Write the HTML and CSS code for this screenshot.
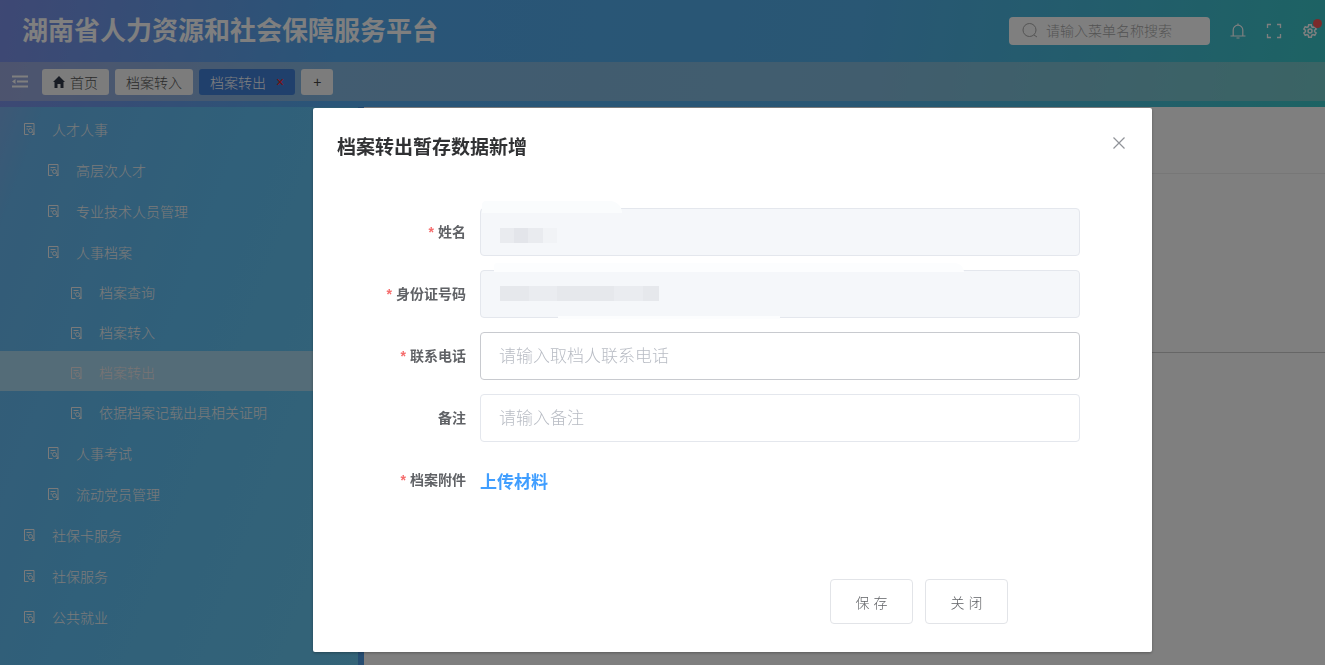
FILE: index.html
```html
<!DOCTYPE html>
<html lang="zh-CN">
<head>
<meta charset="utf-8">
<title>湖南省人力资源和社会保障服务平台</title>
<link rel="stylesheet" href="styles.css">
</head>
<body>
<svg class="sprite" aria-hidden="true">
  <symbol id="doc" viewBox="0 0 12 13"><path d="M5.500 12.500h-4v-11h9.500v11H9M3.500 4.500h5M3.500 7H5M9.500 10l2.200 2.500" fill="none" stroke="currentColor"/><circle cx="7.500" cy="8.500" r="2" fill="none" stroke="currentColor"/></symbol>
</svg>
<div class="app">
  <header class="header">
    <h1 class="brand">湖南省人力资源和社会保障服务平台</h1>
    <div class="tools">
      <label class="search">
        <svg width="18" height="18" viewBox="0 0 18 18" fill="none" stroke="currentColor"><circle cx="8.500" cy="8" r="6.500"/><path d="M13 13l3 2"/></svg>
        <input type="text" placeholder="请输入菜单名称搜索" aria-label="菜单搜索">
      </label>
      <button class="tool" aria-label="通知"><svg width="16" height="16" viewBox="0 0 16 16" fill="none" stroke="currentColor" stroke-width="1.200"><path d="M.5 13h15M3.200 13V7a4.800 4.800 0 0 1 9.600 0v6M8 2.200V.5M6.500 15h3"/></svg></button>
      <button class="tool" aria-label="全屏"><svg width="16" height="16" viewBox="0 0 16 16" fill="none" stroke="currentColor" stroke-width="1.300"><path d="M1.500 5V1.500H5M11 1.500h3.500V5M14.500 11v3.500H11M5 14.500H1.500V11"/></svg></button>
      <button class="tool tool-badge" aria-label="设置"><svg width="16" height="16" viewBox="0 0 16 16" fill="none" stroke="currentColor" stroke-width="1.500"><path d="M6.700 1.800h2.600l.4 1.900 1.200.7 1.900-.7 1.300 2.300-1.500 1.300v1.400l1.500 1.300-1.300 2.300-1.900-.7-1.200.7-.4 1.900H6.700l-.4-1.900-1.200-.7-1.900.7L1.900 10l1.500-1.300V7.300L1.900 6l1.300-2.300 1.900.7 1.200-.7z"/><circle cx="8" cy="8" r="2"/></svg></button>
    </div>
  </header>
  <nav class="tabs">
    <button class="fold" aria-label="折叠菜单"><svg width="16" height="13" viewBox="0 0 16 13" fill="none" stroke="currentColor" stroke-width="2"><path d="M0 1.500h16M5 6.500h11M0 11.500h16"/><path d="M3.500 4L0 6.500 3.500 9z" fill="currentColor" stroke="none"/></svg></button>
    <button class="tab"><svg width="12" height="12" viewBox="0 0 12 12" fill="currentColor"><path d="M6 0l6 6h-1.500v6h-3V8h-3v4h-3V6H0z"/></svg>首页</button>
    <button class="tab">档案转入</button>
    <button class="tab tab-active">档案转出<span class="tab-close">×</span></button>
    <button class="tab tab-add">+</button>
  </nav>
  <div class="body">
    <aside class="side">
      <ul class="menu">
        <li><a href="#" class="item"><svg><use href="#doc"/></svg>人才人事</a></li>
        <li><a href="#" class="item second"><svg><use href="#doc"/></svg>高层次人才</a></li>
        <li><a href="#" class="item second"><svg><use href="#doc"/></svg>专业技术人员管理</a></li>
        <li><a href="#" class="item second"><svg><use href="#doc"/></svg>人事档案</a></li>
        <li><a href="#" class="item third"><svg><use href="#doc"/></svg>档案查询</a></li>
        <li><a href="#" class="item third"><svg><use href="#doc"/></svg>档案转入</a></li>
        <li><a href="#" class="item third active"><svg><use href="#doc"/></svg>档案转出</a></li>
        <li><a href="#" class="item third"><svg><use href="#doc"/></svg>依据档案记载出具相关证明</a></li>
        <li><a href="#" class="item second"><svg><use href="#doc"/></svg>人事考试</a></li>
        <li><a href="#" class="item second"><svg><use href="#doc"/></svg>流动党员管理</a></li>
        <li><a href="#" class="item"><svg><use href="#doc"/></svg>社保卡服务</a></li>
        <li><a href="#" class="item"><svg><use href="#doc"/></svg>社保服务</a></li>
        <li><a href="#" class="item"><svg><use href="#doc"/></svg>公共就业</a></li>
      </ul>
    </aside>
    <main class="main"><div class="panel-head"></div><div class="panel-query"></div></main>
  </div>
</div>
<div class="mask">
  <section class="dialog" role="dialog" aria-labelledby="dlg-title">
    <div class="dialog-head">
      <h2 class="dialog-title" id="dlg-title">档案转出暂存数据新增</h2>
      <button class="close" aria-label="关闭窗口"><svg width="12" height="12" viewBox="0 0 12 12" fill="none" stroke="currentColor" stroke-width="1.200"><path d="M.5.5l11 11M11.500.5l-11 11"/></svg></button>
    </div>
    <form class="form">
      <label class="label required" for="name">姓名</label>
      <div class="field"><input class="input" id="name" type="text" disabled><span class="smear smear-name"></span><span class="mosaic mosaic-name"></span></div>
      <label class="label required" for="idno">身份证号码</label>
      <div class="field"><input class="input" id="idno" type="text" disabled><span class="smear smear-id"></span><span class="smear smear-under"></span><span class="mosaic mosaic-id"></span></div>
      <label class="label required" for="phone">联系电话</label>
      <div class="field"><input class="input hover" id="phone" type="text" placeholder="请输入取档人联系电话"></div>
      <label class="label" for="note">备注</label>
      <div class="field"><input class="input" id="note" type="text" placeholder="请输入备注"></div>
      <span class="label required">档案附件</span>
      <div class="field"><a class="upload" href="#">上传材料</a></div>
    </form>
    <div class="dialog-foot">
      <button class="btn">保 存</button>
      <button class="btn">关 闭</button>
    </div>
  </section>
</div>
</body>
</html>
```
FILE: styles.css
```css
* { box-sizing: border-box; }
body, h1, h2, ul { margin: 0; padding: 0; }
body, button, input {
  font-family: "Liberation Sans", "Noto Sans CJK SC", sans-serif;
  font-size: 14px;
  font-weight: 300;
}
button { border: 0; padding: 0; background: none; color: inherit; }
a { text-decoration: none; color: inherit; }
svg { flex: none; }
.sprite { position: absolute; width: 0; height: 0; }

.app {
  display: flex;
  flex-direction: column;
  height: 100vh;
  overflow: hidden;
  background: linear-gradient(100deg, #7c90e8 0, #54aaf0 24%, #52aee8 60%, #38c8c4 96%);
}
.header {
  display: flex;
  flex: none;
  align-items: center;
  justify-content: space-between;
  height: 62px;
  padding: 0 7px 0 22px;
  color: #fff;
}
.brand { font-size: 26px; font-weight: 700; line-height: 64px; }
.tools { display: flex; align-items: center; gap: 20px; }
.search {
  display: flex;
  align-items: center;
  gap: 7px;
  width: 201px;
  height: 28px;
  padding: 0 12px;
  border-radius: 4px;
  background: #fff;
  color: #a8a8a8;
}
.search input { width: 100%; min-width: 0; padding: 0; border: 0; outline: 0; background: none; }
.search input::placeholder { color: #a8a8a8; }
.tool { display: flex; }
.tool-badge { position: relative; }
.tool-badge::after {
  content: "";
  position: absolute;
  top: -4px;
  right: -4px;
  width: 9px;
  height: 9px;
  border-radius: 50%;
  background: #f55656;
}

.tabs {
  display: flex;
  flex: none;
  align-items: center;
  gap: 6px;
  height: 39px;
  margin-bottom: 6px;
  padding: 0 12px;
  background: rgba(205, 205, 205, .4);
}
.fold { display: flex; margin-right: 8px; color: #fff; }
.tab {
  display: flex;
  align-items: center;
  gap: 5px;
  height: 26px;
  padding: 0 11px;
  border-radius: 3px;
  background: #f8f8f8;
  color: #555;
}
.tab svg { color: #303848; }
.tab-active { background: #4080d8; color: #fff; gap: 10px; }
.tab-close { color: #f02020; }
.tab-add { padding: 0 12px; color: #444; }

.body { display: flex; flex: 1; min-height: 0; }
.side {
  flex: none;
  width: 364px;
  border-right: 6px solid #4c9ae4;
  background: linear-gradient(110deg, #7cb0ec 0, #68b8f0 8%, #60c0f4 45%, #68c8f0 100%);
}
.menu { list-style: none; }
.item {
  display: flex;
  align-items: center;
  gap: 17px;
  height: 41px;
  padding-top: 2px;
  padding-left: 23px;
  color: #f4f4f4;
}
.item svg { width: 12px; height: 13px; }
.second { padding-left: 47px; }
.third { height: 40px; padding-left: 70px; }
.active { background: #a8d8f0; color: #f0e8e8; }
.main { flex: 1; background: #fff; }
.panel-head { height: 67px; border-bottom: 1px solid #eee; }
.panel-query { height: 179px; border-bottom: 1px solid #ccc; }

.mask {
  position: fixed;
  inset: 0;
  display: flex;
  align-items: flex-start;
  padding: 108px 173px 0 313px;
  background: rgba(0, 0, 0, .5);
}
.dialog {
  flex: 1;
  padding-bottom: 28px;
  border-radius: 2px;
  background: #fff;
  box-shadow: 0 1px 3px rgba(0, 0, 0, .3);
}
.dialog-head { display: flex; align-items: flex-start; justify-content: space-between; height: 100px; padding: 24px 27px 0 24px; }
.dialog-title { color: #303133; font-size: 19px; font-weight: 700; line-height: 32px; }
.close { display: flex; margin-top: 5px; color: #909399; }
.form { display: grid; grid-template-columns: 153px 1fr; gap: 14px; padding-right: 72px; }
.label { color: #606266; font-weight: 700; line-height: 48px; text-align: right; }
.required::before { content: "*"; margin-right: 4px; color: #f56c6c; }
.field { position: relative; display: flex; align-items: center; height: 48px; }
.input {
  width: 100%;
  height: 48px;
  padding: 2px 18px 0;
  border: 1px solid #e4e7ed;
  border-radius: 4px;
  outline: 0;
  background: #fff;
  font-size: 17px;
}
.input::placeholder { color: #b8bcc4; }
.input.hover { border-color: #c8cacf; }
.input:disabled { background: #f5f7fa; }
.upload { color: #409eff; font-size: 17px; font-weight: 700; }
.smear { position: absolute; background: #fcfdfe; }
.smear-name { top: -7px; left: 2px; width: 140px; height: 12px; border-radius: 4px 12px 0 0; background: #fafcfd; }
.smear-id { top: -7px; left: 14px; width: 470px; height: 9px; border-radius: 4px 12px 0 0; }
.smear-under { bottom: -1px; left: 78px; width: 222px; height: 3px; }
.mosaic { position: absolute; left: 20px; height: 15px; }
.mosaic-name { top: 20px; width: 57px; background: linear-gradient(90deg, #e9ebef 0 25%, #e3e5ea 25% 50%, #e9ebef 50% 75%, #f1f3f6 75%); }
.mosaic-id { top: 16px; width: 159px; background: linear-gradient(90deg, #e6e8ec 0 18%, #eaecf0 18% 36%, #e6e8ec 36% 72%, #eaecf0 72% 90%, #e6e8ec 90%); }
.dialog-foot { display: flex; justify-content: flex-end; gap: 12px; padding: 75px 144px 0 0; }
.btn { width: 83px; height: 45px; border: 1px solid #e2e4e8; border-radius: 4px; background: #fff; color: #606266; }
```
